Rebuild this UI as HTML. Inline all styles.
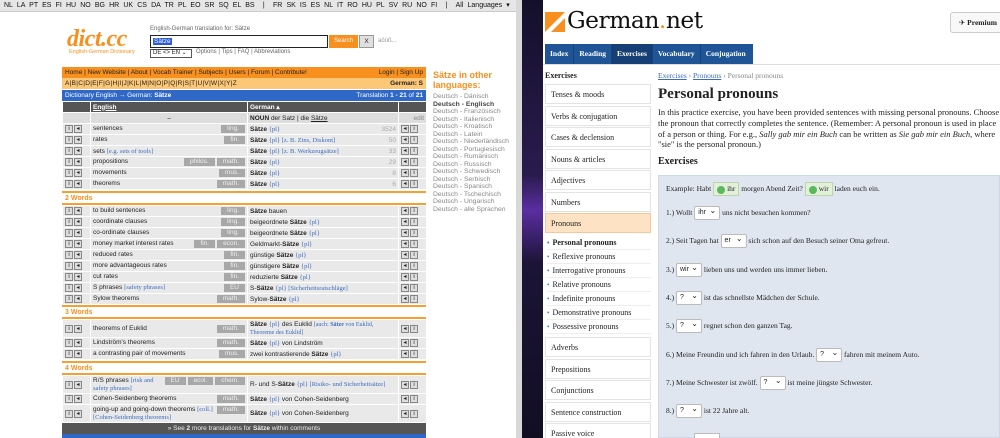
<!DOCTYPE html>
<html><head><meta charset="utf-8"><style>
*{margin:0;padding:0;box-sizing:border-box}
body{width:1000px;height:438px;overflow:hidden;position:relative;background:#fff;font-family:"Liberation Sans",sans-serif}
.abs{position:absolute}
#L{position:absolute;left:0;top:0;width:520px;height:438px;background:#fff;overflow:hidden;font-size:7px;color:#222}
#topbar{height:12px;background:#e6e6e6;border-bottom:1px solid #ccc;font-size:7px;line-height:12px;padding-left:4px;white-space:nowrap;word-spacing:2.2px;color:#111}
table.d{position:absolute;left:62px;width:364px;border-collapse:collapse;table-layout:fixed;font-size:6.5px}
table.d td{background:#e9e9e9;border:1px solid #fff;height:11px;padding:0 2px;vertical-align:middle;white-space:nowrap;overflow:hidden}
.ic{display:inline-block;width:8px;height:8px;border:1px solid #888;background:#ddd;margin-right:1px;vertical-align:middle;font-size:6px;line-height:6px;text-align:center}
.tag{float:right;background:#a8a8a8;color:#eee;padding:0 6px;margin-left:2px;height:8px;line-height:8px}
.pl{color:#3c6cc0;font-family:"Liberation Serif",serif}
.num{float:right;color:#aaa}
.wh{position:absolute;left:62px;width:364px;color:#f7901e;font-weight:bold;font-size:7px;border-bottom:2px solid #f7a030;height:12px;line-height:11px;padding-left:3px}
#scroll{position:absolute;left:516px;top:0;width:6px;height:438px;background:#d8d8d8}
#gap{position:absolute;left:522px;top:0;width:21px;height:438px;background:linear-gradient(180deg,#14102a,#2a1b4e 40%,#5a2ea0 48%,#1b1436 60%,#120e22)}
#R{position:absolute;left:543px;top:0;width:457px;height:438px;background:#fff;font-family:"Liberation Serif","DejaVu Serif",serif;color:#222;overflow:hidden}
.side{position:absolute;left:2px;width:106px;height:20px;border:1px solid #e3e3e3;background:#fff;font-size:8px;line-height:19px;padding-left:5px}
.sub{position:absolute;left:4px;font-size:8px;white-space:nowrap;width:104px;border-bottom:1px solid #eee;height:14px;line-height:13px}
.sub:before{content:"•";color:#3c7bd0;margin-right:3px;font-size:7px}
.q{position:absolute;left:123px;font-size:7.5px;white-space:nowrap;color:#222;line-height:14px}
.sel{display:inline-block;height:14px;border:1px solid #bbb;background:#fff;border-radius:2px;font-family:"Liberation Sans",sans-serif;font-size:7px;line-height:12px;padding:0 3px;vertical-align:middle;width:26px;position:relative}
.sel:after{content:"⌄";position:absolute;right:3px;top:-2px;font-size:8px}
.ok{display:inline-block;background:#e2f0d9;border:1px solid #bcd5b0;height:14px;line-height:12px;padding:0 3px;vertical-align:middle;font-size:7.5px}
.ok b{display:inline-block;width:8px;height:8px;border-radius:50%;background:#5cb85c;vertical-align:middle;margin-right:2px}
</style></head><body>
<div id="L">
<div id="topbar">NL LA PT ES FI HU NO BG HR UK CS DA TR PL EO SR SQ EL BS &nbsp;| &nbsp;FR SK IS ES NL IT RO HU PL SV RU NO FI &nbsp;| &nbsp;All Languages ▾</div>
<div class="abs" style="left:67px;top:26px;font-family:'Liberation Serif',serif;font-style:italic;font-weight:bold;font-size:24px;color:#f7901e;letter-spacing:-0.5px">dict.cc</div>
<div class="abs" style="left:69px;top:49px;font-size:5.5px;color:#f7901e">English-German Dictionary</div>
<div class="abs" style="left:150px;top:26px;font-size:6px;color:#666">English-German translation for: Sätze</div>
<div class="abs" style="left:150px;top:35px;width:178px;height:13px;border:1.5px solid #222;background:#fff"><span style="background:#2a5bd7;color:#fff;font-size:6.5px;margin:2px;display:inline-block;padding:0 1px">Sätze</span></div>
<div class="abs" style="left:329px;top:35px;width:29px;height:13px;background:#f7901e;color:#fff;font-size:6px;line-height:13px;text-align:center">Search</div>
<div class="abs" style="left:359px;top:35px;width:15px;height:13px;background:#e0e0e0;border:1px solid #999;font-size:6.5px;line-height:11px;text-align:center">X</div>
<div class="abs" style="left:378px;top:38px;font-size:6px;color:#999">aöüß...</div>
<div class="abs" style="left:150px;top:49px;width:42px;height:9px;border:1px solid #555;font-size:6px;line-height:7px;padding-left:2px">DE &lt;&gt; EN ⌄</div>
<div class="abs" style="left:196px;top:49px;font-size:6px;color:#666">Options | Tips | FAQ | Abbreviations</div>
<div class="abs" style="left:62px;top:67px;width:364px;height:11px;background:#f7901e;font-size:6.5px;line-height:11px;padding:0 3px;color:#222">Home | New Website | About | Vocab Trainer | Subjects | Users | Forum | Contribute!<span style="float:right">Login | Sign Up</span></div>
<div class="abs" style="left:62px;top:78px;width:364px;height:11px;background:#fcc777;font-size:6.5px;line-height:11px;padding:0 3px;letter-spacing:0.3px">A|B|C|D|E|F|G|H|I|J|K|L|M|N|O|P|Q|R|S|T|U|V|W|X|Y|Z<span style="float:right;font-weight:bold;letter-spacing:0">German: S</span></div>
<div class="abs" style="left:62px;top:90px;width:364px;height:11px;background:#2f68c6;color:#fff;font-size:6.5px;line-height:11px;padding:0 3px">Dictionary English → German: <b>Sätze</b><span style="float:right">Translation <b>1 - 21</b> of <b>21</b></span></div>
<table class="d" style="top:101px">
<colgroup><col style="width:28px"><col style="width:157px"><col style="width:151px"><col style="width:28px"></colgroup>
<tr><td style="background:#555"></td><td style="background:#555;color:#fff;font-weight:bold;text-decoration:underline">English</td><td style="background:#555;color:#fff;font-weight:bold">German ▴</td><td style="background:#555"></td></tr>
<tr><td style="background:#ddd"></td><td style="background:#ddd;text-align:center">–</td><td style="background:#ddd"><b>NOUN</b> der Satz | die <u>Sätze</u></td><td style="background:#ddd;color:#888;text-align:right">edit</td></tr>
<tr><td><span class="ic">i</span><span class="ic">◂</span></td><td>sentences<span class="tag">ling.</span></td><td><b>Sätze</b> <span class="pl">{pl}</span><span class="num">3524</span></td><td><span class="ic">◂</span><span class="ic">i</span></td></tr>
<tr><td><span class="ic">i</span><span class="ic">◂</span></td><td>rates<span class="tag">fin.</span></td><td><b>Sätze</b> <span class="pl">{pl} [z. B. Zins, Diskont]</span><span class="num">50</span></td><td><span class="ic">◂</span><span class="ic">i</span></td></tr>
<tr><td><span class="ic">i</span><span class="ic">◂</span></td><td>sets <span class="pl">[e.g. sets of tools]</span></td><td><b>Sätze</b> <span class="pl">{pl} [z. B. Werkzeugsätze]</span><span class="num">33</span></td><td><span class="ic">◂</span><span class="ic">i</span></td></tr>
<tr><td><span class="ic">i</span><span class="ic">◂</span></td><td>propositions<span class="tag">math.</span><span class="tag">philos.</span></td><td><b>Sätze</b> <span class="pl">{pl}</span><span class="num">29</span></td><td><span class="ic">◂</span><span class="ic">i</span></td></tr>
<tr><td><span class="ic">i</span><span class="ic">◂</span></td><td>movements<span class="tag">mus.</span></td><td><b>Sätze</b> <span class="pl">{pl}</span><span class="num">8</span></td><td><span class="ic">◂</span><span class="ic">i</span></td></tr>
<tr><td><span class="ic">i</span><span class="ic">◂</span></td><td>theorems<span class="tag">math.</span></td><td><b>Sätze</b> <span class="pl">{pl}</span><span class="num">6</span></td><td><span class="ic">◂</span><span class="ic">i</span></td></tr>
</table>
<div class="wh" style="top:191px;border-top:2px solid #f7a030;height:14px;line-height:11px">2 Words</div>
<table class="d" style="top:205px">
<colgroup><col style="width:28px"><col style="width:157px"><col style="width:151px"><col style="width:28px"></colgroup>
<tr><td><span class="ic">i</span><span class="ic">◂</span></td><td>to build sentences<span class="tag">ling.</span></td><td><b>Sätze</b> bauen</td><td><span class="ic">◂</span><span class="ic">i</span></td></tr>
<tr><td><span class="ic">i</span><span class="ic">◂</span></td><td>coordinate clauses<span class="tag">ling.</span></td><td>beigeordnete <b>Sätze</b> <span class="pl">{pl}</span></td><td><span class="ic">◂</span><span class="ic">i</span></td></tr>
<tr><td><span class="ic">i</span><span class="ic">◂</span></td><td>co-ordinate clauses<span class="tag">ling.</span></td><td>beigeordnete <b>Sätze</b> <span class="pl">{pl}</span></td><td><span class="ic">◂</span><span class="ic">i</span></td></tr>
<tr><td><span class="ic">i</span><span class="ic">◂</span></td><td>money market interest rates<span class="tag">econ.</span><span class="tag">fin.</span></td><td>Geldmarkt-<b>Sätze</b> <span class="pl">{pl}</span></td><td><span class="ic">◂</span><span class="ic">i</span></td></tr>
<tr><td><span class="ic">i</span><span class="ic">◂</span></td><td>reduced rates<span class="tag">fin.</span></td><td>günstige <b>Sätze</b> <span class="pl">{pl}</span></td><td><span class="ic">◂</span><span class="ic">i</span></td></tr>
<tr><td><span class="ic">i</span><span class="ic">◂</span></td><td>more advantageous rates<span class="tag">fin.</span></td><td>günstigere <b>Sätze</b> <span class="pl">{pl}</span></td><td><span class="ic">◂</span><span class="ic">i</span></td></tr>
<tr><td><span class="ic">i</span><span class="ic">◂</span></td><td>cut rates<span class="tag">fin.</span></td><td>reduzierte <b>Sätze</b> <span class="pl">{pl}</span></td><td><span class="ic">◂</span><span class="ic">i</span></td></tr>
<tr><td><span class="ic">i</span><span class="ic">◂</span></td><td>S phrases <span class="pl">[safety phrases]</span><span class="tag">EU</span></td><td>S-<b>Sätze</b> <span class="pl">{pl} [Sicherheitsratschläge]</span></td><td><span class="ic">◂</span><span class="ic">i</span></td></tr>
<tr><td><span class="ic">i</span><span class="ic">◂</span></td><td>Sylow theorems<span class="tag">math.</span></td><td>Sylow-<b>Sätze</b> <span class="pl">{pl}</span></td><td><span class="ic">◂</span><span class="ic">i</span></td></tr>
</table>
<div class="wh" style="top:305px;border-top:2px solid #f7a030;height:14px">3 Words</div>
<table class="d" style="top:319px">
<colgroup><col style="width:28px"><col style="width:157px"><col style="width:151px"><col style="width:28px"></colgroup>
<tr><td style="height:18px"><span class="ic">i</span><span class="ic">◂</span></td><td>theorems of Euklid<span class="tag">math.</span></td><td style="white-space:normal;line-height:8px"><b>Sätze</b> <span class="pl">{pl}</span> des Euklid <span class="pl" style="font-size:6px">[auch: <b>Sätze</b> von Euklid, Theoreme des Euklid]</span></td><td><span class="ic">◂</span><span class="ic">i</span></td></tr>
<tr><td><span class="ic">i</span><span class="ic">◂</span></td><td>Lindström's theorems<span class="tag">math.</span></td><td><b>Sätze</b> <span class="pl">{pl}</span> von Lindström</td><td><span class="ic">◂</span><span class="ic">i</span></td></tr>
<tr><td><span class="ic">i</span><span class="ic">◂</span></td><td>a contrasting pair of movements<span class="tag">mus.</span></td><td>zwei kontrastierende <b>Sätze</b> <span class="pl">{pl}</span></td><td><span class="ic">◂</span><span class="ic">i</span></td></tr>
</table>
<div class="wh" style="top:361px;border-top:2px solid #f7a030;height:14px">4 Words</div>
<table class="d" style="top:375px">
<colgroup><col style="width:28px"><col style="width:157px"><col style="width:151px"><col style="width:28px"></colgroup>
<tr><td style="height:18px"><span class="ic">i</span><span class="ic">◂</span></td><td style="white-space:normal;line-height:8px"><span class="tag">chem.</span><span class="tag">ecol.</span><span class="tag">EU</span>R/S phrases <span class="pl">[risk and safety phrases]</span></td><td>R- und S-<b>Sätze</b> <span class="pl">{pl} [Risiko- und Sicherheitsätze]</span></td><td><span class="ic">◂</span><span class="ic">i</span></td></tr>
<tr><td><span class="ic">i</span><span class="ic">◂</span></td><td>Cohen-Seidenberg theorems<span class="tag">math.</span></td><td><b>Sätze</b> <span class="pl">{pl}</span> von Cohen-Seidenberg</td><td><span class="ic">◂</span><span class="ic">i</span></td></tr>
<tr><td style="height:18px"><span class="ic">i</span><span class="ic">◂</span></td><td style="white-space:normal;line-height:8px"><span class="tag">math.</span>going-up and going-down theorems <span class="pl">[coll.] [Cohen-Seidenberg theorems]</span></td><td><b>Sätze</b> <span class="pl">{pl}</span> von Cohen-Seidenberg</td><td><span class="ic">◂</span><span class="ic">i</span></td></tr>
</table>
<div class="abs" style="left:62px;top:423px;width:364px;height:11px;background:#555;color:#eee;font-size:6.5px;line-height:11px;text-align:center">» See <b>2</b> more translations for <b>Sätze</b> within comments</div>
<div class="abs" style="left:62px;top:434px;width:364px;height:4px;background:#2f68c6"></div>
<div class="abs" style="left:433px;top:70px;color:#f7901e;font-weight:bold;font-size:9px;line-height:10px">Sätze in other<br>languages:</div>
<div class="abs" style="left:433px;top:93px;color:#888;font-size:6.8px;line-height:7.5px">Deutsch - Dänisch<br><b style="color:#444">Deutsch - Englisch</b><br>Deutsch - Französisch<br>Deutsch - Italienisch<br>Deutsch - Kroatisch<br>Deutsch - Latein<br>Deutsch - Niederländisch<br>Deutsch - Portugiesisch<br>Deutsch - Rumänisch<br>Deutsch - Russisch<br>Deutsch - Schwedisch<br>Deutsch - Serbisch<br>Deutsch - Spanisch<br>Deutsch - Tschechisch<br>Deutsch - Ungarisch<br>Deutsch - alle Sprachen</div>
</div>
<div id="scroll"></div>
<div id="gap"></div>
<div id="R">
<svg class="abs" style="left:2px;top:12px" width="20" height="20"><polygon points="0,0 20,0 0,20" fill="#f7901e"/><polygon points="20,6 20,20 6,20" fill="#f7901e"/></svg>
<div class="abs" style="left:24px;top:6px;font-family:'DejaVu Serif','Liberation Serif',serif;font-size:23.4px;color:#111;letter-spacing:-0.5px">German<span style="color:#f7901e">.</span>net</div>
<div class="abs" style="left:407px;top:12px;width:60px;height:21px;border:1px solid #ccc;border-radius:3px;background:#f8f8f8;font-size:7.5px;line-height:19px;padding-left:8px">✈ <b>Premium</b></div>
<div class="abs" style="left:2px;top:44px;width:208px;height:20px;background:#1f5596;color:#fff;font-size:7.5px;font-weight:bold;line-height:20px;display:flex">
<span style="padding:0 5px;border-right:1px solid #14427a">Index</span><span style="padding:0 5px;border-right:1px solid #14427a">Reading</span><span style="padding:0 5px;background:#153f75;border-right:1px solid #14427a">Exercises</span><span style="padding:0 5px;border-right:1px solid #14427a">Vocabulary</span><span style="padding:0 5px">Conjugation</span></div>
<div class="abs" style="left:0;top:64px;width:457px;height:1px;background:#ddd"></div>
<div class="abs" style="left:2px;top:71px;font-size:8px;font-weight:bold">Exercises</div>
<div class="side" style="top:84px">Tenses &amp; moods</div>
<div class="side" style="top:106px">Verbs &amp; conjugation</div>
<div class="side" style="top:127px">Cases &amp; declension</div>
<div class="side" style="top:149px">Nouns &amp; articles</div>
<div class="side" style="top:170px">Adjectives</div>
<div class="side" style="top:192px">Numbers</div>
<div class="side" style="top:213px;background:#fde3c4;border-color:#f2c89a">Pronouns</div>
<div class="sub" style="top:236px;font-weight:bold">Personal pronouns</div>
<div class="sub" style="top:250px">Reflexive pronouns</div>
<div class="sub" style="top:264px">Interrogative pronouns</div>
<div class="sub" style="top:278px">Relative pronouns</div>
<div class="sub" style="top:292px">Indefinite pronouns</div>
<div class="sub" style="top:306px">Demonstrative pronouns</div>
<div class="sub" style="top:320px">Possessive pronouns</div>
<div class="side" style="top:337px">Adverbs</div>
<div class="side" style="top:359px">Prepositions</div>
<div class="side" style="top:380px">Conjunctions</div>
<div class="side" style="top:402px">Sentence construction</div>
<div class="side" style="top:423px">Passive voice</div>
<div class="abs" style="left:115px;top:71px;font-size:7.5px;color:#888;white-space:nowrap"><u style="color:#3c6cc0">Exercises</u> › <u style="color:#3c6cc0">Pronouns</u> › Personal pronouns</div>
<div class="abs" style="left:115px;top:86px;font-size:15px;font-weight:bold;color:#222">Personal pronouns</div>
<div class="abs" style="left:115px;top:107px;font-size:8.5px;line-height:10.8px;white-space:nowrap;color:#222">In this practice exercise, you have been provided sentences with missing personal pronouns. Choose<br>the pronoun that correctly completes the sentence. (Remember: A personal pronoun is used in place<br>of a person or thing. For e.g., <i>Sally gab mir ein Buch</i> can be written as <i>Sie gab mir ein Buch</i>, where<br>"sie" is the personal pronoun.)</div>
<div class="abs" style="left:115px;top:156px;font-size:10px;font-weight:bold">Exercises</div>
<div class="abs" style="left:115px;top:175px;width:342px;height:263px;background:#dfe6f0;border:1px solid #cfd8e6"></div>
<div class="q" style="top:182px">Example: Habt <span class="ok"><b></b>ihr</span> morgen Abend Zeit? <span class="ok"><b></b>wir</span> laden euch ein.</div>
<div class="q" style="top:206px">1.) Wollt <span class="sel">ihr</span> uns nicht besuchen kommen?</div>
<div class="q" style="top:234px">2.) Seit Tagen hat <span class="sel">er</span> sich schon auf den Besuch seiner Oma gefreut.</div>
<div class="q" style="top:263px">3.) <span class="sel">wir</span> lieben uns und werden uns immer lieben.</div>
<div class="q" style="top:291px">4.) <span class="sel">?</span> ist das schnellste Mädchen der Schule.</div>
<div class="q" style="top:319px">5.) <span class="sel">?</span> regnet schon den ganzen Tag.</div>
<div class="q" style="top:348px">6.) Meine Freundin und ich fahren in den Urlaub. <span class="sel">?</span> fahren mit meinem Auto.</div>
<div class="q" style="top:376px">7.) Meine Schwester ist zwölf. <span class="sel">?</span> ist meine jüngste Schwester.</div>
<div class="q" style="top:404px">8.) <span class="sel">?</span> ist 22 Jahre alt.</div>
<div class="abs" style="left:151px;top:433px;width:26px;height:14px;border:1px solid #bbb;background:#fff"></div>
</div>
</body></html>
